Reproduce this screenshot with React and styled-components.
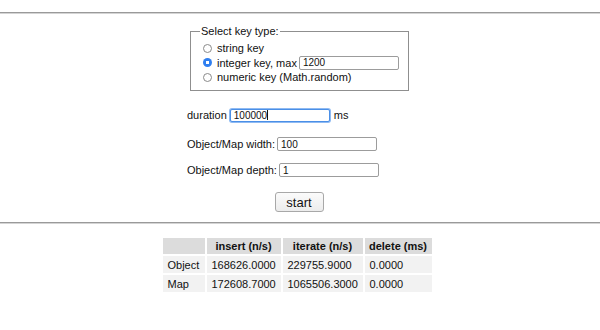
import React from "react";
import styled, { createGlobalStyle } from "styled-components";

const GlobalStyle = createGlobalStyle`
  html, body {
    margin: 0;
    padding: 0;
    background: #ffffff;
  }
  body {
    font-family: "Liberation Sans", Arial, sans-serif;
    font-size: 11px;
    color: #111;
  }
`;

const Rule = styled.div`
  height: 0;
  border-top: 1px solid #9a9a9a;
  border-bottom: 1px solid #d4d4d4;
  margin-top: ${(p) => p.$top}px;
`;

const Panel = styled.div`
  width: 226px;
  margin: 0 auto;
  display: flex;
  flex-direction: column;
`;

const KeyBox = styled.fieldset`
  box-sizing: border-box;
  width: 219px;
  min-width: 0;
  margin: 11px 0 0 3px;
  padding: 3px 9px 6px 11px;
  border: 1px solid #8f8f8f;
  display: flex;
  flex-direction: column;
`;

const Legend = styled.legend`
  padding: 0 1px 0 1px;
  margin-left: -2px;
  line-height: 13px;
  font-size: 11px;
`;

const RadioRow = styled.label`
  display: flex;
  align-items: center;
  height: ${(p) => p.$h || 14}px;
  gap: 5px;
  white-space: nowrap;
`;

const Radio = styled.span`
  box-sizing: border-box;
  width: 9px;
  height: 9px;
  border-radius: 50%;
  flex: none;
  border: ${(p) => (p.$on ? "none" : "1px solid #8a8a8a")};
  background: ${(p) =>
    p.$on
      ? "radial-gradient(circle, #ffffff 0 1.5px, #2f7ff0 2px)"
      : "#ffffff"};
  margin-left: 1px;
`;

const Field = styled.span`
  box-sizing: border-box;
  display: inline-flex;
  flex: none;
  align-items: center;
  width: 100px;
  height: ${(p) => p.$h || 14}px;
  padding-left: 3px;
  border: 1px solid ${(p) => (p.$focused ? "#4a8fe7" : "#9c9c9c")};
  box-shadow: ${(p) => (p.$focused ? "0 0 0 1px #8fbaf2" : "none")};
  border-radius: 2px;
  font-size: 10px;
  color: #111;
  margin-left: ${(p) => p.$left ?? 2}px;
  background: #fff;
`;

const Caret = styled.span`
  display: inline-block;
  width: 1px;
  height: 10px;
  background: #111;
`;

const Row = styled.div`
  display: flex;
  align-items: center;
  height: 14px;
  margin-top: ${(p) => p.$top}px;
  white-space: nowrap;
`;

const Unit = styled.span`
  margin-left: 4px;
`;

const StartButton = styled.button`
  box-sizing: border-box;
  align-self: center;
  width: 49px;
  height: 20px;
  margin: 15px 0 0 -2px;
  font-family: "Liberation Sans", Arial, sans-serif;
  font-size: 13px;
  color: #111;
  background: linear-gradient(#fbfbfb, #ececec);
  border: 1px solid #a8a8a8;
  border-radius: 3px;
  padding: 0;
`;

const Results = styled.table`
  margin: 12px auto 0;
  border-spacing: 2px;
  position: relative;
  left: -3px;
`;

const Head = styled.th`
  background: #dcdcdc;
  font-weight: bold;
  font-size: 11px;
  height: 16px;
  padding: 0 4px;
  text-align: center;
  width: ${(p) => p.$w}px;
`;

const Cell = styled.td`
  background: #f2f2f2;
  font-size: 11px;
  height: 17px;
  padding: 0 4px 0 5px;
  text-align: left;
`;

const rows = [
  ["Object", "168626.0000", "229755.9000", "0.0000"],
  ["Map", "172608.7000", "1065506.3000", "0.0000"],
];

export default function App() {
  return (
    <>
      <GlobalStyle />
      <Rule $top={12} />
      <Panel>
        <KeyBox>
          <Legend>Select key type:</Legend>
          <RadioRow>
            <Radio />
            string key
          </RadioRow>
          <RadioRow $h={15}>
            <Radio $on />
            integer key, max
            <Field $left={-3}>1200</Field>
          </RadioRow>
          <RadioRow>
            <Radio />
            numeric key (Math.random)
          </RadioRow>
        </KeyBox>
        <Row $top={17}>
          duration
          <Field $focused $left={3} $h={13}>
            100000
            <Caret />
          </Field>
          <Unit>ms</Unit>
        </Row>
        <Row $top={15}>
          Object/Map width:
          <Field>100</Field>
        </Row>
        <Row $top={12}>
          Object/Map depth:
          <Field>1</Field>
        </Row>
        <StartButton>start</StartButton>
      </Panel>
      <Rule $top={10} />
      <Results>
        <thead>
          <tr>
            <Head $w={34} />
            <Head $w={66}>insert (n/s)</Head>
            <Head $w={72}>iterate (n/s)</Head>
            <Head $w={59}>delete (ms)</Head>
          </tr>
        </thead>
        <tbody>
          {rows.map((r) => (
            <tr key={r[0]}>
              {r.map((v, i) => (
                <Cell key={i}>{v}</Cell>
              ))}
            </tr>
          ))}
        </tbody>
      </Results>
    </>
  );
}
